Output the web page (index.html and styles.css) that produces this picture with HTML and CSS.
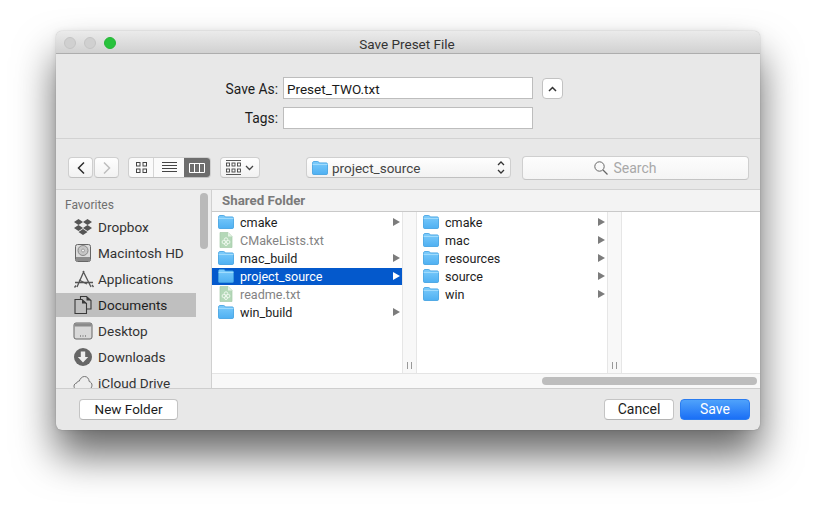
FILE: index.html
```html
<!DOCTYPE html>
<html lang="en">
<head>
<meta charset="utf-8">
<title>Save Preset File</title>
<link rel="stylesheet" href="styles.css">
</head>
<body>
<svg class="defs" width="0" height="0" aria-hidden="true">
  <defs>
    <linearGradient id="fg" x1="0" y1="0" x2="0" y2="1"><stop offset="0" stop-color="#7ccbfb"/><stop offset="1" stop-color="#4fb0f2"/></linearGradient>
    <symbol id="folder" viewBox="0 0 16 14">
      <path d="M.5 2.200C.5 1.200 1 .5 2 .5h3.600c.7 0 1 .3 1.300.8l.4.6H14c1 0 1.500.5 1.500 1.400v9.200c0 .7-.5 1-1.200 1H1.700c-.8 0-1.200-.4-1.200-1z" fill="url(#fg)" stroke="#3c9ee0" stroke-width=".8"/>
      <path d="M.6 3.400h14.800" stroke="#a6defd" stroke-width="1"/>
    </symbol>
    <symbol id="txtfile" viewBox="0 0 14 16">
      <path d="M1 .5h8l4 4v11H1z" fill="#b4d8b8" stroke="#a8ccab" stroke-width=".7"/>
      <path d="M9 .5v4h4z" fill="#e6f3e6"/>
      <g fill="none" stroke="#eef8ee" stroke-width="1"><circle cx="7" cy="7.500" r="1.700"/><circle cx="4.800" cy="10" r="1.700"/><circle cx="9.200" cy="10" r="1.700"/><circle cx="7" cy="12" r="1.500"/></g>
    </symbol>
  </defs>
</svg>

<main class="window">
  <header class="titlebar">
    <div class="lights"><span class="light"></span><span class="light"></span><span class="light light-green"></span></div>
    <h1 class="title">Save Preset File</h1>
  </header>

  <section class="form">
    <div class="form-row">
      <label class="form-label form-label-first">Save As:</label>
      <div class="field">Preset_TWO.txt</div>
      <button class="collapse" aria-label="Collapse">
        <svg width="9" height="6" viewBox="0 0 9 6"><path d="M1 5l3.500-3.500L8 5" fill="none" stroke="#333" stroke-width="1.500"/></svg>
      </button>
    </div>
    <div class="form-row">
      <label class="form-label">Tags:</label>
      <div class="field"></div>
    </div>
  </section>

  <nav class="toolbar">
    <div class="nav-pair">
      <button class="tool nav-btn"><svg width="10" height="14" viewBox="0 0 10 14"><path d="M8 1.500L2.500 7 8 12.500" fill="none" stroke="#2b2b2b" stroke-width="1.500"/></svg></button>
      <button class="tool nav-btn"><svg width="10" height="14" viewBox="0 0 10 14"><path d="M2 1.500L7.500 7 2 12.500" fill="none" stroke="#bdbdbd" stroke-width="1.500"/></svg></button>
    </div>
    <div class="views">
      <button class="view view-icons"><svg width="11" height="11" viewBox="0 0 11 11"><g fill="none" stroke="#444" stroke-width="1"><rect x=".5" y=".5" width="3.500" height="3.500"/><rect x="7" y=".5" width="3.500" height="3.500"/><rect x=".5" y="7" width="3.500" height="3.500"/><rect x="7" y="7" width="3.500" height="3.500"/></g></svg></button>
      <button class="view view-list"><svg width="15" height="11" viewBox="0 0 15 11"><path d="M0 .5h15M0 3.500h15M0 6.500h15M0 9.500h15" stroke="#444" stroke-width="1"/></svg></button>
      <button class="view view-columns"><svg width="16" height="10" viewBox="0 0 16 10"><path d="M.5.5h15v9H.5zM5.500.5v9M10.500.5v9" fill="none" stroke="#fff" stroke-width="1"/></svg></button>
    </div>
    <button class="tool arrange">
      <svg width="15" height="15" viewBox="0 0 15 15"><g fill="none" stroke="#444" stroke-width=".9"><path d="M0 .5h15M0 14.500h15"/><rect x=".5" y="3" width="3" height="3"/><rect x="6" y="3" width="3" height="3"/><rect x="11.500" y="3" width="3" height="3"/><rect x=".5" y="9" width="3" height="3"/><rect x="6" y="9" width="3" height="3"/><rect x="11.500" y="9" width="3" height="3"/></g></svg>
      <svg width="9" height="6" viewBox="0 0 9 6"><path d="M1 1l3.500 3.500L8 1" fill="none" stroke="#444" stroke-width="1.300"/></svg>
    </button>
    <button class="tool path-popup">
      <svg class="path-folder" width="16" height="14"><use href="#folder"/></svg>
      <span class="path-name">project_source</span>
      <svg class="updown" width="8" height="15" viewBox="0 0 8 15"><path d="M1 5l3-3 3 3M1 10l3 3 3-3" fill="none" stroke="#333" stroke-width="1.300"/></svg>
    </button>
    <div class="search">
      <svg width="14" height="14" viewBox="0 0 14 14"><circle cx="5.500" cy="5.500" r="4.700" fill="none" stroke="#666" stroke-width="1"/><path d="M9 9l4.500 4.500" stroke="#666" stroke-width="1.200"/></svg>
      <span>Search</span>
    </div>
  </nav>

  <div class="browser">
    <aside class="sidebar">
      <div class="side-heading">Favorites</div>
      <div class="side-item">
        <svg class="side-icon" width="20" height="18" viewBox="0 0 20 18"><path fill="#555" d="M5.500 1L1 4l4.500 3L10 4zM14.500 1L10 4l4.500 3L19 4zM1 10l4.500 3L10 10 5.500 7zM19 10l-4.500 3L10 10l4.500-3zM5.500 14l4.500-3 4.500 3-4.500 3z"/></svg>
        Dropbox
      </div>
      <div class="side-item">
        <svg class="side-icon" width="20" height="20" viewBox="0 0 20 20"><rect x="2.500" y="1.500" width="15" height="17" rx="2" fill="#dcdcdc" stroke="#666"/><rect x="3" y="14" width="14" height="4" fill="#8c8c8c"/><ellipse cx="10" cy="7.500" rx="5" ry="5" fill="#c6c6c6" stroke="#888"/><circle cx="10" cy="7.500" r="1.500" fill="#eee" stroke="#888" stroke-width=".7"/></svg>
        Macintosh HD
      </div>
      <div class="side-item">
        <svg class="side-icon" width="22" height="20" viewBox="0 0 22 20"><g fill="none" stroke="#555" stroke-width="1.300"><path d="M11 2L4 18M10 2l8 16M2 13.500h18M3 16.500l-1.500 2M19 16l1.500 2"/><path d="M6 11l8 4"/></g></svg>
        Applications
      </div>
      <div class="side-item side-item-selected">
        <svg class="side-icon" width="20" height="20" viewBox="0 0 20 20"><path d="M7.500 4V1.500h6l4.500 4V14h-4.500" fill="none" stroke="#3a3a3a" stroke-width="1.100"/><path d="M2 4.500h7l4.500 4v10H2z" fill="none" stroke="#3a3a3a" stroke-width="1.100"/><path d="M9 4.500v4h4.500z" fill="#3a3a3a"/><path d="M13.500 1.500v4H18z" fill="#3a3a3a"/></svg>
        Documents
      </div>
      <div class="side-item">
        <svg class="side-icon" width="20" height="18" viewBox="0 0 20 18"><rect x="1" y="1" width="18" height="16" rx="2" fill="#d8d8d8" stroke="#666"/><rect x="1.500" y="1.500" width="17" height="3" fill="#8a8a8a"/><path d="M7 14h1M9.500 14h1M12 14h1" stroke="#555"/></svg>
        Desktop
      </div>
      <div class="side-item">
        <svg class="side-icon" width="20" height="20" viewBox="0 0 20 20"><circle cx="10" cy="10" r="9" fill="#666"/><path d="M7.800 4.500h4.400v5.500h3L10 15.500 4.800 10h3z" fill="#eee"/></svg>
        Downloads
      </div>
      <div class="side-item">
        <svg class="side-icon" width="20" height="16" viewBox="0 0 20 16"><path d="M5 14.500H4.500C2.500 14.500 1 13 1 11.200s1.300-3 2.800-3.200C4 6.700 5 6 6.200 6.200 7.200 3.500 9 1.500 11.500 1.500c2.800 0 4.500 2.200 4.700 5 1.700.4 2.800 2 2.800 3.700 0 2.400-1.700 4.300-4 4.300z" fill="none" stroke="#666" stroke-width=".9"/></svg>
        iCloud Drive
      </div>
      <div class="side-scroll"></div>
    </aside>

    <div class="main-pane">
      <div class="pathbar">Shared Folder</div>
      <div class="columns">
        <ul class="column">
          <li class="row"><svg class="row-icon" width="16" height="14"><use href="#folder"/></svg><span class="row-name">cmake</span><i class="arrow"></i></li>
          <li class="row row-file"><svg class="row-icon" width="14" height="16"><use href="#txtfile"/></svg><span class="row-name">CMakeLists.txt</span></li>
          <li class="row"><svg class="row-icon" width="16" height="14"><use href="#folder"/></svg><span class="row-name">mac_build</span><i class="arrow"></i></li>
          <li class="row row-selected"><svg class="row-icon" width="16" height="14"><use href="#folder"/></svg><span class="row-name">project_source</span><i class="arrow"></i></li>
          <li class="row row-file"><svg class="row-icon" width="14" height="16"><use href="#txtfile"/></svg><span class="row-name">readme.txt</span></li>
          <li class="row"><svg class="row-icon" width="16" height="14"><use href="#folder"/></svg><span class="row-name">win_build</span><i class="arrow"></i></li>
        </ul>
        <div class="col-grip"><span class="grip-mark"></span></div>
        <ul class="column">
          <li class="row"><svg class="row-icon" width="16" height="14"><use href="#folder"/></svg><span class="row-name">cmake</span><i class="arrow"></i></li>
          <li class="row"><svg class="row-icon" width="16" height="14"><use href="#folder"/></svg><span class="row-name">mac</span><i class="arrow"></i></li>
          <li class="row"><svg class="row-icon" width="16" height="14"><use href="#folder"/></svg><span class="row-name">resources</span><i class="arrow"></i></li>
          <li class="row"><svg class="row-icon" width="16" height="14"><use href="#folder"/></svg><span class="row-name">source</span><i class="arrow"></i></li>
          <li class="row"><svg class="row-icon" width="16" height="14"><use href="#folder"/></svg><span class="row-name">win</span><i class="arrow"></i></li>
        </ul>
        <div class="col-grip"><span class="grip-mark"></span></div>
        <div class="column-empty"></div>
      </div>
      <div class="hscroll"><div class="hthumb"></div></div>
    </div>
  </div>

  <footer class="footer">
    <button class="btn btn-new">New Folder</button>
    <div class="footer-right">
      <button class="btn btn-cancel">Cancel</button>
      <button class="btn btn-save">Save</button>
    </div>
  </footer>
</main>
</body>
</html>
```

FILE: styles.css
```css
* { box-sizing: border-box; }
html, body { margin: 0; height: 100%; overflow: hidden; background: #fff; }
body { padding: 31px 0 0 56px; font-family: Roboto, "Liberation Sans", sans-serif; font-size: 13px; color: #222; }
.defs { position: absolute; }
button { font: inherit; color: inherit; padding: 0; margin: 0; }
ul { list-style: none; margin: 0; padding: 0; }

.window {
  width: 704px; height: 399px; display: flex; flex-direction: column;
  background: #e8e8e8; border-radius: 6px;
  box-shadow: 0 0 1px rgba(0,0,0,.35), 0 0 6px rgba(0,0,0,.08), 0 25px 40px rgba(0,0,0,.6);
  overflow: hidden;
}

.titlebar {
  height: 23px; flex: none; display: flex; align-items: center; position: relative;
  background: linear-gradient(#ebebeb, #d1d1d1); border-bottom: 1px solid #adadad;
}
.lights { display: flex; gap: 8px; padding: 2px 0 0 8px; }
.light { width: 12px; height: 12px; border-radius: 50%; background: #d0d0d0; border: 1px solid #c4c4c4; }
.light-green { background: #28c23c; border-color: #25b636; }
.title { position: absolute; left: 0; right: 0; margin: 0; padding: 4px 2px 0 0; text-align: center; font-size: 13.500px; font-weight: 400; color: #333; }

.form { height: 85px; flex: none; padding-top: 23px; border-bottom: 1px solid #d2d2d2; display: flex; flex-direction: column; gap: 8px; }
.form-row { display: flex; align-items: center; height: 22px; }
.form-label { width: 222px; text-align: right; font-size: 13.800px; color: #1c1c1c; }
.form-label-first { padding-top: 2px; }
.field {
  width: 250px; height: 22px; margin-left: 5px; padding: 0 3px; line-height: 22px;
  background: #fff; border: 1px solid #bdbdbd; font-size: 13.500px; color: #1a1a1a;
}
.collapse {
  width: 21px; height: 21px; margin: 1px 0 0 9px; background: #fff; border: 1px solid #c2c2c2; border-radius: 4px;
  display: flex; align-items: center; justify-content: center;
}

.toolbar { height: 51px; flex: none; display: flex; align-items: center; padding: 7px 0 0 12px; border-bottom: 1px solid #d2d2d2; }
.tool {
  height: 21px; background: linear-gradient(#fefefe, #f2f2f2); border: 1px solid #cfcfcf; border-bottom-color: #c0c0c0; border-radius: 4px;
  display: flex; align-items: center; justify-content: center;
}
.nav-pair { display: flex; gap: 1px; }
.nav-btn { width: 25px; }
.views { display: flex; margin-left: 9px; height: 21px; border-radius: 4px; overflow: hidden; background: #fafafa; border: 1px solid #cfcfcf; border-bottom-color: #c0c0c0; }
.view { border: 0; background: none; display: flex; align-items: center; justify-content: center; }
.view-icons { width: 25px; border-right: 1px solid #d5d5d5; }
.view-list { width: 30px; }
.view-columns { width: 26px; background: #6d6d6d; }
.arrange { width: 40px; margin-left: 9px; gap: 4px; }
.path-popup { width: 205px; margin-left: 46px; justify-content: flex-start; padding: 0 5px; }
.path-folder { flex: none; }
.path-name { margin-left: 4px; font-size: 13.500px; color: #444; }
.updown { margin-left: auto; }
.search {
  width: 227px; height: 24px; margin-left: 11px; display: flex; align-items: center; justify-content: center; gap: 5px; padding-right: 20px;
  background: linear-gradient(#fdfdfd, #f4f4f4); border: 1px solid #cfcfcf; border-bottom-color: #c4c4c4; border-radius: 4px;
  font-size: 14px; color: #a8a8a8;
}

.browser { height: 199px; flex: none; display: flex; border-bottom: 1px solid #cecece; }
.sidebar { width: 156px; flex: none; position: relative; overflow: hidden; background: #ededed; border-right: 1px solid #d0d0d0; padding-top: 9px; }
.side-heading { height: 15px; line-height: 13px; padding-left: 9px; font-size: 12px; color: #6f6f6f; }
.side-item { height: 26px; width: 140px; display: flex; align-items: center; padding: 0 0 0 42px; position: relative; font-size: 13.600px; color: #333; }
.side-item-selected { height: 24px; margin: 1px 0; background: #bfbfbf; color: #1f1f1f; }
.side-icon { position: absolute; left: 17px; top: 50%; transform: translateY(-50%); }
.side-scroll { position: absolute; left: 144px; top: 3px; width: 8px; height: 56px; border-radius: 4px; background: #b9b9b9; }

.main-pane { flex: 1; min-width: 0; display: flex; flex-direction: column; background: #fff; }
.pathbar { height: 22px; flex: none; padding-left: 10px; line-height: 21px; background: #f3f3f3; border-bottom: 1px solid #c9c9c9; font-size: 13.300px; font-weight: 700; color: #7a7a7a; }
.columns { flex: 1; min-height: 0; display: flex; }
.column { width: 190px; flex: none; padding-top: 2px; }
.column-empty { flex: 1; }
.row { height: 18px; display: flex; align-items: center; padding: 0 0 2px 6px; position: relative; color: #1d1d1d; }
.row-icon { flex: none; margin-right: 6px; }
.row-file .row-icon { margin: 0 7px 0 1px; }
.row-file { color: #838383; }
.row-selected { padding-bottom: 1px; background: #0459cc; border-bottom: 1px solid #fff; color: #fff; }
.row-name { font-size: 12.600px; }
.arrow { margin-left: auto; margin-right: 2px; width: 0; height: 0; border-left: 7px solid #7c7c7c; border-top: 4px solid transparent; border-bottom: 4px solid transparent; }
.row-selected .arrow { border-left-color: #fff; }
.col-grip { width: 15px; flex: none; background: #f8f8f8; border-left: 1px solid #e6e6e6; border-right: 1px solid #e6e6e6; display: flex; align-items: flex-end; justify-content: center; padding-bottom: 4px; }
.grip-mark { width: 5px; height: 7px; border-left: 1px solid #999; border-right: 1px solid #999; }
.hscroll { height: 15px; flex: none; padding: 3px 3px 0 330px; background: #f8f8f8; border-top: 1px solid #e4e4e4; }
.hthumb { height: 8px; border-radius: 4px; background: #bdbdbd; }

.footer { flex: 1; display: flex; align-items: flex-start; justify-content: space-between; padding: 10px 10px 0 23px; }
.footer-right { display: flex; gap: 6px; }
.btn { height: 21px; background: #fff; border: 1px solid #c4c4c4; border-bottom-color: #b4b4b4; border-radius: 4px; font-size: 14px; color: #1c1c1c; line-height: 19px; }
.btn-new { width: 99px; font-size: 13.500px; }
.btn-cancel { width: 70px; }
.btn-save { width: 70px; background: linear-gradient(#4fa2fb, #1a6ff6); border-color: #2a7cf0; color: #fff; }
```
